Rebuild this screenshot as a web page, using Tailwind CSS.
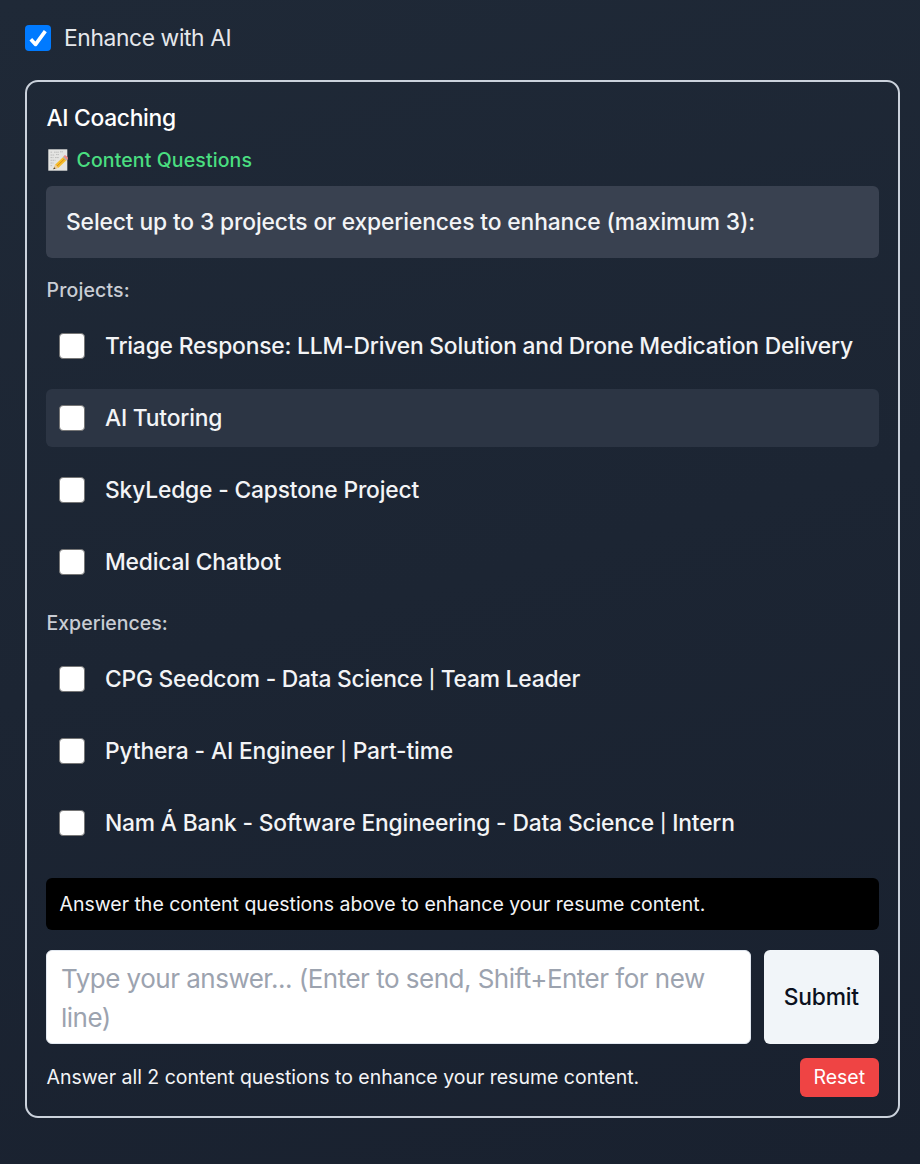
<!DOCTYPE html>
<html lang="en">
<head>
<meta charset="utf-8">
<title>AI Coaching</title>
<script src="https://cdn.jsdelivr.net/npm/@tailwindcss/browser@4"></script>
</head>
<body class="h-[1164px] overflow-hidden bg-linear-165 from-[#1f2937] to-[#19212f] px-[25px] font-['Inter',sans-serif] text-[22.8px] whitespace-nowrap text-[#f3f4f6]">
<label class="flex h-[80px] items-center gap-[13px] pb-[4px] text-[#e5e7eb]">
  <svg class="size-[26px]" viewBox="0 0 26 26"><rect width="26" height="26" rx="4" fill="#007aff"/><path d="M5.8 14.3l4.8 5.1L20.3 6.2" fill="none" stroke="#fff" stroke-width="3.7" stroke-linejoin="round"/></svg>
  <span class="pt-px tracking-[-0.38px]">Enhance with AI</span>
</label>

<main class="h-[1038px] w-[875px] rounded-[13px] border-2 border-[#cbd2dc] px-[19.5px]">
  <h2 class="mt-[20px] h-[32px] leading-[32px] font-medium tracking-[-0.3px] text-white">AI Coaching</h2>
  <div class="mt-[13px] flex h-[26px] items-center gap-[9px] text-[19.5px] font-medium text-[#4ade80]">
    <svg class="ml-[1px] h-[22px] w-[20px]" viewBox="0 0 20 22">
      <rect x=".3" y=".3" width="19" height="21.4" fill="#e4e4e2"/>
      <path d="M2.5 3.2h2M6 3.2h5M12 2.8h3M2.5 6h4M8 5.6h3M2.5 8.6h3M7 8.6h4M2.5 11.3h5M2.5 14h3M2.5 16.7h2" stroke="#b0b0b0" stroke-width=".8" stroke-dasharray="1.6 .5"/>
      <path d="M5.3 20.3l2-4.8L16 7.2l3.2 3.2-8.7 8.3z" fill="#f5bd2c"/>
      <path d="M8.8 17.3l8.8-8.5" stroke="#d98a12" stroke-width="1"/>
      <path d="M5.3 20.3l2-4.8 3.2 3.2z" fill="#edcb98"/><path d="M5.3 20.3l.8-2 1.4 1.2z" fill="#333"/>
      <path d="M14.8 8.3l1.2-1.1 3.2 3.2-1.2 1.1z" fill="#aeb4ba"/>
      <path d="M16 7.2c1.4-1.5 4.6 1.4 3.2 3.2z" fill="#ef8a8c" stroke="#ef8a8c"/>
    </svg>
    <span class="pt-[2px] tracking-[0.12px]">Content Questions</span>
  </div>
  <div class="mt-[13px] -ml-[0.5px] flex h-[72px] items-center rounded-[6px] bg-[#394150] px-[20px] pt-px font-medium tracking-[-0.12px]">Select up to 3 projects or experiences to enhance (maximum 3):</div>

  <h3 class="mt-[19px] h-[26px] text-[19.5px] leading-[26px] font-medium tracking-[0.15px] text-[#c9cdd4]">Projects:</h3>
  <div class="mt-[14px] -ml-[0.5px] flex flex-col gap-[14px] font-medium">
    <label class="flex h-[58px] items-center gap-[20px] rounded-[6px] px-[13px]"><span class="size-[26px] rounded-[4px] border-[1.6px] border-[#767676] bg-white"></span><span class="pt-px tracking-[-0.19px]">Triage Response: LLM-Driven Solution and Drone Medication Delivery</span></label>
    <label class="flex h-[58px] items-center gap-[20px] rounded-[6px] bg-[#2c3544] px-[13px]"><span class="size-[26px] rounded-[4px] border-[1.6px] border-[#767676] bg-white"></span><span class="pt-px tracking-[-0.2px]">AI Tutoring</span></label>
    <label class="flex h-[58px] items-center gap-[20px] rounded-[6px] px-[13px]"><span class="size-[26px] rounded-[4px] border-[1.6px] border-[#767676] bg-white"></span><span class="pt-px tracking-[-0.17px]">SkyLedge - Capstone Project</span></label>
    <label class="flex h-[58px] items-center gap-[20px] rounded-[6px] px-[13px]"><span class="size-[26px] rounded-[4px] border-[1.6px] border-[#767676] bg-white"></span><span class="pt-px tracking-[-0.19px]">Medical Chatbot</span></label>
  </div>

  <h3 class="mt-[19px] h-[26px] text-[19.5px] leading-[26px] font-medium text-[#c9cdd4]">Experiences:</h3>
  <div class="mt-[14px] -ml-[0.5px] flex flex-col gap-[14px] font-medium">
    <label class="flex h-[58px] items-center gap-[20px] rounded-[6px] px-[13px]"><span class="size-[26px] rounded-[4px] border-[1.6px] border-[#767676] bg-white"></span><span class="pt-px tracking-[-0.22px]">CPG Seedcom - Data Science <span class="align-[1px] text-[18.5px]">|</span> Team Leader</span></label>
    <label class="flex h-[58px] items-center gap-[20px] rounded-[6px] px-[13px]"><span class="size-[26px] rounded-[4px] border-[1.6px] border-[#767676] bg-white"></span><span class="pt-px tracking-[-0.14px]">Pythera - AI Engineer <span class="align-[1px] text-[18.5px]">|</span> Part-time</span></label>
    <label class="flex h-[58px] items-center gap-[20px] rounded-[6px] px-[13px]"><span class="size-[26px] rounded-[4px] border-[1.6px] border-[#767676] bg-white"></span><span class="pt-px tracking-[-0.16px]">Nam Á Bank - Software Engineering - Data Science <span class="align-[1px] text-[18.5px]">|</span> Intern</span></label>
  </div>

  <div class="mt-[26px] -ml-[0.5px] flex h-[52px] items-center rounded-[6px] bg-black px-[13.5px] pt-[2px] text-[19.5px] tracking-[-0.01px]">Answer the content questions above to enhance your resume content.</div>
  <div class="mt-[20px] -ml-[0.5px] flex h-[94px] gap-[13px]">
    <div class="flex-1 rounded-[6px] border border-[#e2e8f0] bg-white pt-[8px] pl-[14px] text-[26px] leading-[39px] tracking-[-0.51px] text-[#9ca3af]">Type your answer... (Enter to send, Shift+Enter for new<br>line)</div>
    <button class="w-[114.5px] rounded-[6px] bg-[#f1f5f9] pt-px font-[450] tracking-[-0.2px] text-[#0b1020]">Submit</button>
  </div>
  <div class="mt-[13px] flex h-[40px] items-center justify-between text-[19.5px]">
    <span class="pt-px tracking-[-0.01px]">Answer all 2 content questions to enhance your resume content.</span>
    <button class="h-[39px] w-[78.5px] rounded-[6px] bg-[#ef4444] pt-px text-white">Reset</button>
  </div>
</main>
</body>
</html>
